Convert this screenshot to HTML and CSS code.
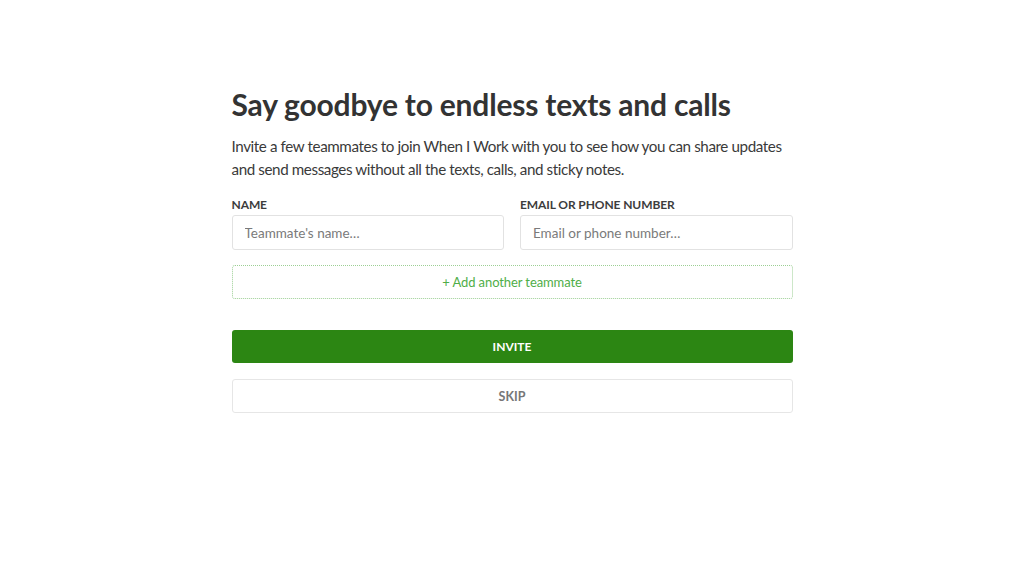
FILE: index.html
```html
<!DOCTYPE html>
<html>
<head>
<meta charset="utf-8">
<link rel="stylesheet" href="styles.css">
</head>
<body>
<main class="page">
  <section class="card">
    <h1 class="title">Say goodbye to endless texts and calls</h1>
    <p class="lead">Invite a few teammates to join When I Work with you to see how you can share updates and send messages without all the texts, calls, and sticky notes.</p>
    <div class="fields">
      <label class="field">
        <span class="label">NAME</span>
        <input class="input" type="text" placeholder="Teammate's name…">
      </label>
      <label class="field">
        <span class="label">EMAIL OR PHONE NUMBER</span>
        <input class="input" type="text" placeholder="Email or phone number…">
      </label>
    </div>
    <button class="add" type="button">+ Add another teammate</button>
    <button class="invite" type="button">INVITE</button>
    <button class="skip" type="button">SKIP</button>
  </section>
</main>
</body>
</html>
```

FILE: styles.css
```css
* { box-sizing: border-box; }
html, body { margin: 0; padding: 0; background: #fff; }
body {
  font-family: Lato, "Open Sans", "Liberation Sans", sans-serif;
  color: #333;
}
.page {
  display: flex;
  justify-content: center;
  padding-top: 84px;
}
.card {
  width: 561px;
  display: flex;
  flex-direction: column;
}
.title {
  margin: 0;
  font-size: 30px;
  font-weight: 700;
  line-height: 40px;
  color: #333;
  letter-spacing: -0.2px;
}
.lead {
  margin: 11px 0 0;
  font-size: 15.2px;
  line-height: 23px;
  color: #3a3a3a;
  letter-spacing: -0.4px;
}
.fields {
  display: grid;
  grid-template-columns: 1fr 1fr;
  column-gap: 16px;
  margin-top: 16px;
}
.field {
  display: flex;
  flex-direction: column;
}
.label {
  font-size: 12px;
  font-weight: 700;
  line-height: 16px;
  color: #3d3d3d;
  margin-bottom: 2px;
  letter-spacing: -0.1px;
}
.input {
  height: 35px;
  border: 1px solid #e2e2e2;
  border-radius: 3px;
  padding: 0 12px;
  font-family: inherit;
  font-size: 13.5px;
  color: #333;
  outline: none;
}
.input::placeholder { color: #7a7a7a; }
.add {
  margin-top: 15px;
  height: 34px;
  border: 1px dotted #9ccf94;
  border-radius: 3px;
  background: #fff;
  color: #4fae47;
  font-family: inherit;
  font-size: 13px;
  letter-spacing: -0.1px;
}
.invite {
  margin-top: 31px;
  height: 33px;
  border: none;
  border-radius: 3px;
  background: #2c8613;
  color: #fff;
  font-family: inherit;
  font-size: 12px;
  font-weight: 700;
}
.skip {
  margin-top: 16px;
  height: 34px;
  border: 1px solid #e6e6e6;
  border-radius: 3px;
  background: #fff;
  color: #777;
  font-family: inherit;
  font-size: 12.5px;
  font-weight: 700;
}
```
